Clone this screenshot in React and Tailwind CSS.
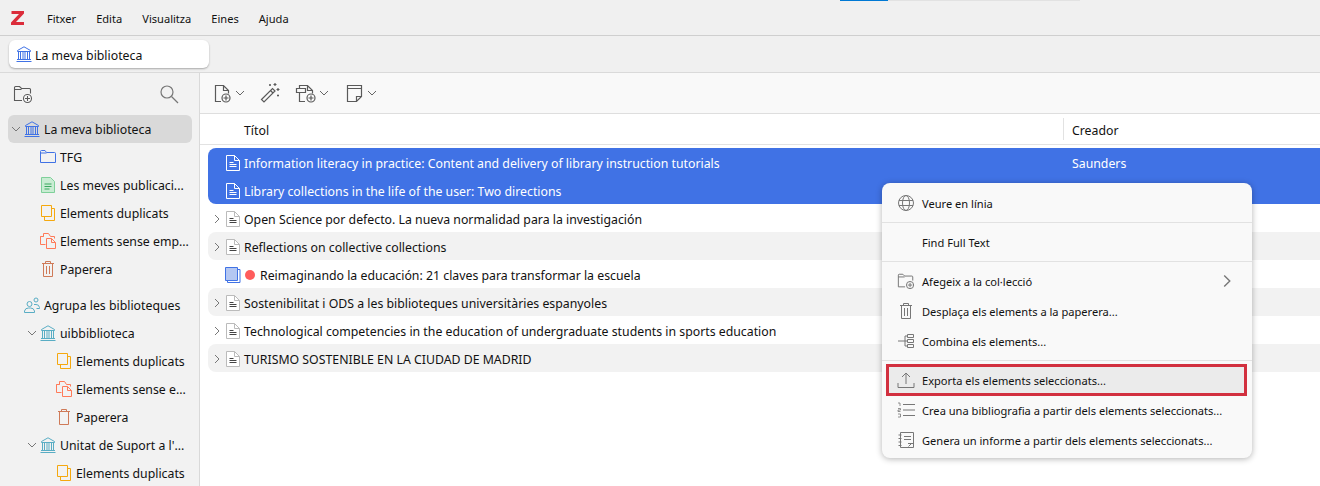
import React from "react";

const font = "font-['Noto_Sans','Open_Sans',sans-serif]";

// icons, drawn by hand since the packages don't have zotero's set
const Logo = () => (
  <svg width="13" height="14" viewBox="0 0 13 14" fill="#db2c3a" className="-mt-1">
    <path d="M.5 0H13v2.500L5 11h8v3H0v-2.500L8 3H.5z" />
  </svg>
);
const Library = ({ color = "#4072e5" }) => (
  <svg width="16" height="16" viewBox="0 0 16 16" fill="none" stroke={color}>
    <path d="M1.500 4.500 8 .8l6.500 3.700v1h-13zM1 13.500h14M.5 15.500h15" />
    <path d="M2.500 6v7M4.500 6v7M7 6v7M9 6v7M11.500 6v7M13.500 6v7" />
  </svg>
);
const Folder = () => (
  <svg width="16" height="16" viewBox="0 0 16 16" fill="none" stroke="#4072e5">
    <path d="M.5 13.500v-11a1 1 0 0 1 1-1h3.500l1.500 2h8a1 1 0 0 1 1 1v9z" />
    <path d="M.5 4h6" />
  </svg>
);
const Publications = () => (
  <svg width="16" height="16" viewBox="0 0 16 16" fill="none">
    <path d="M1.500.5h9l4 4v11h-13z" fill="#c9ecd3" stroke="#7fd09a" />
    <path d="M4.500 7h7M4.500 9.500h7M4.500 12h5" stroke="#39a85f" />
  </svg>
);
const Duplicates = () => (
  <svg width="16" height="16" viewBox="0 0 16 16" fill="none" stroke="#f5a80e">
    <path d="M1.500.5h10v11h-10z" />
    <path d="M11.500 3.500h3v12h-10v-4" />
  </svg>
);
const Unfiled = () => (
  <svg width="16" height="16" viewBox="0 0 16 16" fill="none" stroke="#ff7a59">
    <path d="M5.500 11.500h-5v-8h3v-3h5l2 3h4v2" />
    <path d="M.5 3.500h3" />
    <path d="M6.500 5.500h5l4 4v6h-9zM11.500 5.500v4h4" />
  </svg>
);
const Trash = ({ color = "#cf7a58", bars = true }) => (
  <svg width="16" height="16" viewBox="0 0 16 16" fill="none" stroke={color}>
    <path d="M2 2.500h12M5.500 2.500v-2h5v2M3.500 2.500v13h9v-13" />
    {bars && <path d="M6.500 5v8M9.500 5v8" />}
  </svg>
);
const Group = () => (
  <svg width="16" height="16" viewBox="0 0 16 16" fill="none" stroke="#59adc4">
    <circle cx="5.500" cy="7" r="2.500" />
    <circle cx="12" cy="3" r="2" />
    <path d="M.5 15.500v-1.500a4 4 0 0 1 4-3h2a4 4 0 0 1 4 3v1.500zM10 7.500h2a3.500 3.500 0 0 1 3.500 3v1h-3" />
  </svg>
);
const Doc = ({ color = "#bbb", line = "#444", fill = "#fff" }) => (
  <svg width="16" height="16" viewBox="0 0 16 16" fill="none">
    <path d="M1.500.5h8l5 5v10h-13z" fill={fill} stroke={color} />
    <path d="M9.500.5v5h5" stroke={color} />
    <path d="M4.500 7.500h4M4.500 9.500h7M4.500 11.500h7" stroke={line} />
  </svg>
);
const Book = () => (
  <svg width="16" height="16" viewBox="0 0 16 16" fill="none" stroke="#4072e5">
    <path d="M.5.5h12v13H.5z" fill="#b4c7f2" />
    <path d="M12.500 2.500h2.500v13H2.500v-2" />
  </svg>
);
const Chevron = ({ open, color = "#777", size = 10 }) => (
  <svg width={size} height={size} viewBox="0 0 10 10" fill="none" stroke={color}>
    <path d={open ? "M1 3l4 4 4-4" : "M3 1l4 4-4 4"} />
  </svg>
);
const AddBadge = ({ x = 11.500, y = 11.500 }) => (
  <>
    <circle cx={x} cy={y} r="4" fill="#f9f9f9" />
    <path d={`M${x - 2.500} ${y}h5M${x} ${y - 2.500}v5`} />
  </>
);
const NewItem = () => (
  <svg width="20" height="20" viewBox="0 0 20 20" fill="none" stroke="#5a5a5a" strokeWidth="1.200">
    <path d="M9 18.500H3.500v-16h8l5 5v3M11.500 2.500v5h5" />
    <AddBadge x={14} y={15} />
  </svg>
);
const Wand = () => (
  <svg width="20" height="20" viewBox="0 0 20 20" fill="none" stroke="#5a5a5a" strokeWidth="1.200">
    <path d="M1.500 16.500 12.500 5.500l2.500 2.500-11 11z" />
    <path d="M10.500 7.500l2.500 2.500" />
    <path d="M15 0v3M13.500 1.500h3M18 5v3M16.500 6.500h3M10 1v2M9 2h2M18 11.500v2M17 12.500h2" />
  </svg>
);
const NewAttachment = () => (
  <svg width="22" height="20" viewBox="0 0 22 20" fill="none" stroke="#5a5a5a" strokeWidth="1.200">
    <path d="M4.500 5.500v-3h8l5 5v3M12.500 2.500v5h5M4.500 9.500v9H10" />
    <path d="M1.500 5.500h9v4h-9z" fill="#f9f9f9" />
    <AddBadge x={16} y={15} />
  </svg>
);
const Note = () => (
  <svg width="20" height="20" viewBox="0 0 20 20" fill="none" stroke="#5a5a5a" strokeWidth="1.200">
    <path d="M2.500 2.500h14v11l-5 5h-9zM2.500 5.500h14M11.500 18.500v-5h5" />
  </svg>
);
const NewCollection = ({ size = 20, color = "#5a5a5a" }) => (
  <svg width={size} height={size} viewBox="0 0 20 20" fill="none" stroke={color} strokeWidth="1.100">
    <path d="M9 16.500H1.500v-13a1 1 0 0 1 1-1h4l2 2h8a1 1 0 0 1 1 1v4M1.500 5.500h7" />
    <AddBadge x={14.500} y={14.500} />
  </svg>
);
const Search = () => (
  <svg width="20" height="20" viewBox="0 0 20 20" fill="none" stroke="#777" strokeWidth="1.200">
    <circle cx="8" cy="8" r="6" />
    <path d="M12.500 12.500 19 19" />
  </svg>
);
const Globe = () => (
  <svg width="18" height="18" viewBox="0 0 18 18" fill="none" stroke="#777">
    <circle cx="9" cy="9" r="7.500" />
    <ellipse cx="9" cy="9" rx="3.500" ry="7.500" />
    <path d="M2 6.500h14M2 11.500h14" />
  </svg>
);
const Merge = () => (
  <svg width="18" height="18" viewBox="0 0 18 18" fill="none" stroke="#777">
    <path d="M10.500 2.500h6v3h-6zM10.500 7.500h6v3h-6zM10.500 12.500h6v3h-6zM1 9h9M8 4h2.500M8 14h2.500M8 4v10" />
  </svg>
);
const Upload = () => (
  <svg width="18" height="18" viewBox="0 0 18 18" fill="none" stroke="#777">
    <path d="M1 12v4.500h16V12M9 13V2M5 6l4-4 4 4" />
  </svg>
);
const Bibliography = () => (
  <svg width="18" height="18" viewBox="0 0 18 18" fill="none" stroke="#777">
    <path d="M6 3.500h12M6 9h12M6 14.500h12" />
    <path d="M1 2h2v3M1 7.500h2.500v1.500h-2.500v1.500h2.500M1 13h2.500v3h-2.500" strokeWidth=".8" />
  </svg>
);
const Report = () => (
  <svg width="18" height="18" viewBox="0 0 18 18" fill="none" stroke="#777">
    <path d="M3.500 1.500h13v15h-13zM1.500 4h3M1.500 7.500h3M1.500 11h3M1.500 14.500h3M7 5.500h7M7 8.500h7M11.500 15.500l3-3M11 12.500h5.500" />
  </svg>
);

const collections = [
  { icon: <Library />, label: "La meva biblioteca", open: true, selected: true, pad: "pl-0" },
  { icon: <Folder />, label: "TFG", pad: "pl-8" },
  { icon: <Publications />, label: "Les meves publicaci...", pad: "pl-8" },
  { icon: <Duplicates />, label: "Elements duplicats", pad: "pl-8" },
  { icon: <Unfiled />, label: "Elements sense emp...", pad: "pl-8" },
  { icon: <Trash />, label: "Paperera", pad: "pl-8" },
];

const groups = [
  { icon: <Group />, label: "Agrupa les biblioteques", pad: "pl-4" },
  { icon: <Library color="#59adc4" />, label: "uibbiblioteca", open: true, pad: "pl-4" },
  { icon: <Duplicates />, label: "Elements duplicats", pad: "pl-12" },
  { icon: <Unfiled />, label: "Elements sense e...", pad: "pl-12" },
  { icon: <Trash bars={false} />, label: "Paperera", pad: "pl-12" },
  { icon: <Library color="#59adc4" />, label: "Unitat de Suport a l'...", open: true, pad: "pl-4" },
  { icon: <Duplicates />, label: "Elements duplicats", pad: "pl-12" },
];

const items = [
  { title: "Open Science por defecto. La nueva normalidad para la investigación", more: true },
  { title: "Reflections on collective collections", more: true, stripe: true },
  { title: "Reimaginando la educación: 21 claves para transformar la escuela", book: true },
  { title: "Sostenibilitat i ODS a les biblioteques universitàries espanyoles", more: true, stripe: true },
  { title: "Technological competencies in the education of undergraduate students in sports education", more: true },
  { title: "TURISMO SOSTENIBLE EN LA CIUDAD DE MADRID", more: true, stripe: true },
];

const Icon = ({ children }) => <span className="w-4 h-4 flex items-center justify-center shrink-0">{children}</span>;

const SideRow = ({ row }) => (
  <div className={`h-7 flex items-center rounded-md text-[12.3px] whitespace-nowrap ${row.pad} ${row.selected ? "bg-[#d9d9d9]" : ""}`}>
    {row.open && (
      <span className="w-[13px] mr-[3px] flex justify-end">
        <Chevron open />
      </span>
    )}
    <Icon>{row.icon}</Icon>
    <span className="ml-1 pt-0.5 text-[#111]">{row.label}</span>
  </div>
);

const Sidebar = () => (
  <aside className="w-[200px] shrink-0 bg-[#f2f2f2] border-r border-[#d9d9d9] overflow-hidden">
    <div className="h-[42px] flex items-center justify-between pl-[13px] pr-5">
      <NewCollection />
      <Search />
    </div>
    <div className="pl-2 pr-[7px]">
      {collections.map((row) => (
        <SideRow key={row.label} row={row} />
      ))}
      <div className="h-2" />
      {groups.map((row, i) => (
        <SideRow key={i} row={row} />
      ))}
    </div>
  </aside>
);

const Toolbar = () => (
  <div className="h-[41px] shrink-0 flex items-center bg-[#f9f9f9] border-b border-[#dedede] pl-3">
    <NewItem />
    <span className="ml-[3px]"><Chevron open color="#666" /></span>
    <span className="ml-[15px]"><Wand /></span>
    <span className="ml-[15px]"><NewAttachment /></span>
    <span className="ml-[2px]"><Chevron open color="#666" /></span>
    <span className="ml-4"><Note /></span>
    <span className="ml-[2px]"><Chevron open color="#666" /></span>
  </div>
);

const ItemRow = ({ item }) => (
  <div className={`h-7 pt-0.5 flex items-center ml-2 rounded-l-lg text-[12.3px] text-[#111] whitespace-nowrap ${item.stripe ? "bg-[#f2f2f2]" : ""}`}>
    <span className="w-[17px] flex justify-center">{item.more && <Chevron color="#777" />}</span>
    <Icon>{item.book ? <Book /> : <Doc />}</Icon>
    {item.book && <span className="w-[10px] h-[10px] rounded-full bg-[#ff5c5c] ml-1" />}
    <span className={`pt-0.5 ${item.book ? "ml-[5px]" : "ml-[3px]"}`}>{item.title}</span>
  </div>
);

const MenuItem = ({ icon, label, arrow, active }) => (
  <div className={`relative h-[30px] flex items-center text-[11.1px] text-[#111] whitespace-nowrap ${active ? "bg-[#ebebeb] mx-[5px] px-[10px]" : "pl-[15px] pr-[18px]"}`}>
    <span className="w-[18px] h-[18px] flex items-center justify-center shrink-0">{icon}</span>
    <span className="ml-[7px] pt-0.5 flex-1">{label}</span>
    {arrow && <Chevron color="#777" size={14} />}
    {active && <div className="absolute -top-px -bottom-px -left-px right-0 border-[3px] border-[#d2303f]" />}
  </div>
);

const Sep = () => <div className="h-px bg-[#e2e2e2] my-1" />;

const ContextMenu = () => (
  <div className="absolute left-[882px] top-[183px] w-[370px] pt-[5px] pb-[3px] bg-[#f9f9f9] rounded-lg shadow-[0_1px_6px_rgba(0,0,0,0.3)]">
    <MenuItem icon={<Globe />} label="Veure en línia" />
    <Sep />
    <MenuItem label="Find Full Text" />
    <Sep />
    <MenuItem icon={<NewCollection size={18} color="#777" />} label="Afegeix a la col·lecció" arrow />
    <MenuItem icon={<Trash color="#777" />} label="Desplaça els elements a la paperera..." />
    <MenuItem icon={<Merge />} label="Combina els elements..." />
    <Sep />
    <MenuItem icon={<Upload />} label="Exporta els elements seleccionats..." active />
    <MenuItem icon={<Bibliography />} label="Crea una bibliografia a partir dels elements seleccionats..." />
    <MenuItem icon={<Report />} label="Genera un informe a partir dels elements seleccionats..." />
  </div>
);

export default function App() {
  return (
    <div className={`relative w-[1320px] h-[486px] overflow-hidden bg-white flex flex-col ${font}`}>
      {/* menu bar */}
      <div className="relative h-9 shrink-0 flex items-center pt-1 pl-[11px] gap-5 bg-[#f0f0f0] border-b border-[#cfcfcf] text-[11.1px] text-[#111]">
        <span className="w-[16px]"><Logo /></span>
        <span>Fitxer</span>
        <span>Edita</span>
        <span>Visualitza</span>
        <span>Eines</span>
        <span>Ajuda</span>
        <div className="absolute top-0 left-[840px] w-[48px] h-px bg-[#0078d4]" />
        <div className="absolute top-0 left-[888px] w-[192px] h-px bg-[#e2e2e2]" />
      </div>
      {/* tabs */}
      <div className="h-[37px] shrink-0 flex items-center pl-[9px] bg-[#f0f0f0] border-b border-[#dadada]">
        <div className="w-[200px] h-7 flex items-center gap-[3px] pl-[7px] bg-white rounded-md shadow-[0_1px_2px_rgba(0,0,0,0.3)] text-[12.3px] text-[#111]">
          <Library />
          <span className="pt-1">La meva biblioteca</span>
        </div>
      </div>
      <div className="flex-1 flex min-h-0">
        <Sidebar />
        <main className="flex-1 flex flex-col min-w-0">
          <Toolbar />
          <div className="h-[31px] shrink-0 flex items-center border-b border-[#e2e2e2] text-[12.3px] text-[#111]">
            <span className="ml-[44px] w-[819px] pt-1">Títol</span>
            <span className="h-[22px] border-l border-[#e2e2e2] pl-2 leading-[26px]">Creador</span>
          </div>
          <div className="pt-[3px]">
            <div className="ml-2 bg-[#4072e5] rounded-l-lg text-white text-[12.3px] whitespace-nowrap">
              <div className="h-7 pt-0.5 flex items-center pl-[17px]">
                <Doc color="#fff" line="#fff" fill="none" />
                <span className="ml-[3px] pt-0.5 w-[828px]">Information literacy in practice: Content and delivery of library instruction tutorials</span>
                <span className="pt-0.5">Saunders</span>
              </div>
              <div className="h-7 pt-0.5 flex items-center pl-[17px]">
                <Doc color="#fff" line="#fff" fill="none" />
                <span className="ml-[3px] pt-0.5">Library collections in the life of the user: Two directions</span>
              </div>
            </div>
            {items.map((item) => (
              <ItemRow key={item.title} item={item} />
            ))}
          </div>
        </main>
      </div>
      <ContextMenu />
    </div>
  );
}
